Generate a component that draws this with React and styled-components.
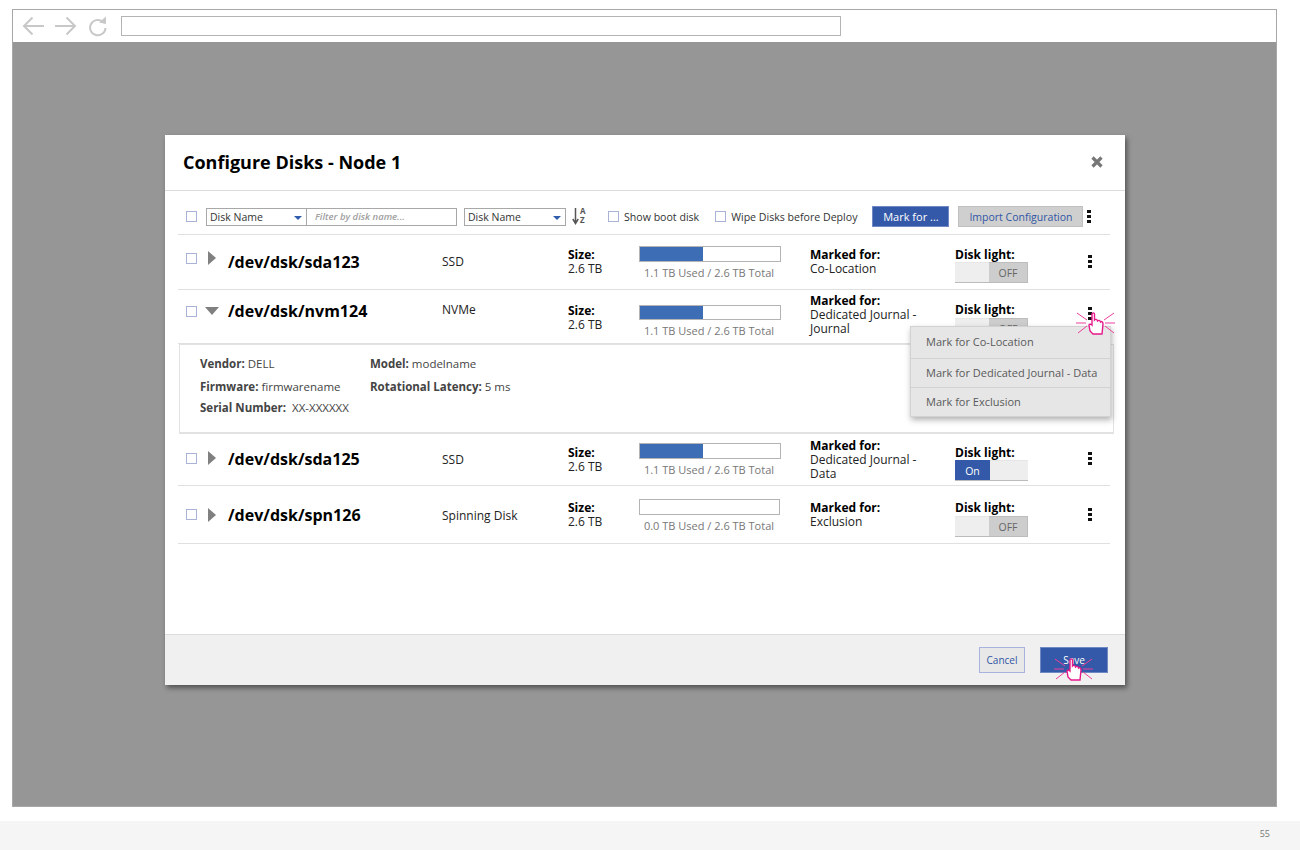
import React from "react";
import styled, { createGlobalStyle } from "styled-components";

const Global = createGlobalStyle`
  html, body { margin: 0; padding: 0; background: #fff; }
  body { font-family: "Open Sans", "Noto Sans", sans-serif; width: 1300px; height: 850px; overflow: hidden; }
  * { box-sizing: border-box; }
`;

const Page = styled.div`
  width: 1300px;
  height: 850px;
  padding-top: 9px;
  display: flex;
  flex-direction: column;
`;
const Browser = styled.div`
  margin-left: 12px;
  width: 1265px;
  height: 798px;
  border: 1px solid #a8a8a8;
  display: flex;
  flex-direction: column;
`;
const BrowserBar = styled.div`
  height: 32px;
  flex: none;
  background: #fff;
  display: flex;
  align-items: center;
  padding-left: 9px;
  svg { display: block; flex: none; }
`;
const AddressBar = styled.div`
  width: 720px;
  height: 20px;
  margin-left: 13px;
  border: 1px solid #b4b4b4;
  background: #fff;
`;
const Backdrop = styled.div`
  flex: 1;
  background: #969696;
  padding: 93px 0 0 152px;
`;
const Modal = styled.div`
  position: relative;
  width: 960px;
  height: 550px;
  background: #fff;
  box-shadow: 2px 3px 5px rgba(0, 0, 0, 0.45);
  display: flex;
  flex-direction: column;
`;
const ModalHeader = styled.div`
  height: 56px;
  flex: none;
  border-bottom: 1px solid #dcdcdc;
  display: flex;
  align-items: center;
  justify-content: space-between;
  padding: 0 22px 2px 18px;
`;
const Title = styled.h1`
  margin: 0;
  font-size: 18px;
  line-height: 24px;
  font-weight: 700;
  color: #000;
`;
const Body = styled.div`
  flex: 1;
  padding: 0 15px 0 13px;
  position: relative;
`;
const Toolbar = styled.div`
  height: 44px;
  border-bottom: 1px solid #e0e0e0;
  display: flex;
  align-items: center;
  padding: 8px 0 0 8px;
  color: #333;
  font-size: 10.5px;
`;
const Check = styled.span`
  display: block;
  width: 11px;
  height: 11px;
  flex: none;
  border: 1px solid #aab2d8;
  background: #fff;
`;
const Combo = styled.div`
  display: flex;
  height: 18px;
  margin-left: ${(p) => p.$ml}px;
  width: ${(p) => p.$w}px;
  border: 1px solid #a8a8a8;
  flex: none;
`;
const Select = styled.div`
  position: relative;
  width: ${(p) => (p.$w ? p.$w + "px" : "100%")};
  height: 100%;
  padding-left: 3px;
  font-size: 10.5px;
  line-height: 16px;
  color: #333;
  flex: none;
  &::after {
    content: "";
    position: absolute;
    right: 4px;
    top: 7px;
    border-left: 4px solid transparent;
    border-right: 4px solid transparent;
    border-top: 4px solid #2f5cad;
  }
`;
const FilterInput = styled.div`
  flex: 1;
  border-left: 1px solid #a8a8a8;
  padding-left: 8px;
  font-size: 9.5px;
  line-height: 16px;
  font-style: italic;
  font-weight: 600;
  color: #a0a0a0;
`;
const SortIcon = styled.svg`
  margin-left: 6px;
  flex: none;
`;
const CheckLabel = styled.label`
  display: flex;
  align-items: center;
  flex: none;
  gap: 5px;
  margin-left: ${(p) => p.$ml}px;
  font-size: 10.6px;
  color: #333;
  white-space: nowrap;
`;
const Button = styled.div`
  height: ${(p) => p.$h || 21}px;
  width: ${(p) => p.$w}px;
  margin-left: ${(p) => p.$ml || 0}px;
  flex: none;
  display: flex;
  align-items: center;
  justify-content: center;
  padding-top: ${(p) => p.$pt || 0}px;
  font-size: ${(p) => p.$fs || 10.5}px;
  background: ${(p) => (p.$kind === "primary" ? "#3359a8" : p.$kind === "cancel" ? "#e8e8e8" : "#cfcfcf")};
  color: ${(p) => (p.$kind === "primary" ? "#fff" : "#2f55a4")};
  border: 1px solid ${(p) => (p.$kind === "primary" ? "#7088c4" : p.$kind === "cancel" ? "#a8b2dc" : "#c0c0c0")};
`;
const DotsWrap = styled.div`
  display: flex;
  flex-direction: column;
  gap: 2px;
  width: 4px;
  flex: none;
  margin-left: ${(p) => p.$ml || 0}px;
`;
const Dot = styled.i`
  display: block;
  width: 4px;
  height: 3px;
  background: #111;
`;
const Dots = (p) => (
  <DotsWrap {...p}>
    <Dot />
    <Dot />
    <Dot />
  </DotsWrap>
);

const Row = styled.div`
  height: ${(p) => p.$h}px;
  border-bottom: 1px solid #e0e0e0;
  display: grid;
  grid-template-columns: 21px 21px 214px 126px 71px 171px 145px 120px 1fr;
  padding-left: 8px;
  color: #222;
  font-size: 12px;
  line-height: 14px;
`;
const Cell = styled.div`
  padding-top: ${(p) => p.$t}px;
  min-width: 0;
`;
const Triangle = styled.div`
  width: 0;
  height: 0;
  ${(p) =>
    p.$open
      ? `border-left: 7px solid transparent; border-right: 7px solid transparent; border-top: 8px solid #808080; margin-left: -2px;`
      : `border-top: 7px solid transparent; border-bottom: 7px solid transparent; border-left: 8px solid #808080; margin-left: 1px;`}
`;
const DiskName = styled.div`
  font-size: 16px;
  line-height: 22px;
  font-weight: 700;
  color: #000;
`;
const Strong = styled.div`
  font-weight: 700;
  color: #000;
`;
const Bar = styled.div`
  width: ${(p) => p.$w || 142}px;
  height: ${(p) => p.$h || 16}px;
  border: 1px solid #b4b4b4;
  background: #fff;
`;
const BarFill = styled.div`
  height: 100%;
  background: #3d6db5;
`;
const BarText = styled.div`
  width: 140px;
  margin-top: 4px;
  text-align: center;
  font-size: 11px;
  line-height: 14px;
  color: #777;
`;
const Toggle = styled.div`
  display: flex;
  width: 73px;
  height: 21px;
  margin-top: ${(p) => p.$mt || 0}px;
  border-bottom: 1px solid #bbb;
  font-size: 10.5px;
`;
const ToggleSide = styled.div`
  width: ${(p) => p.$w}px;
  display: flex;
  align-items: center;
  justify-content: center;
  background: ${(p) => (p.$tone === "on" ? "#3359a8" : p.$tone === "off" ? "#cdcdcd" : "#eeeeee")};
  color: ${(p) => (p.$tone === "on" ? "#fff" : "#666")};
  border-top: 1px solid ${(p) => (p.$tone === "off" ? "#bdbdbd" : p.$tone === "on" ? "#3359a8" : "#e6e6e6")};
  border-right: ${(p) => (p.$tone === "off" ? "1px solid #bdbdbd" : "none")};
`;
const Detail = styled.div`
  height: 90px;
  margin: 0 -4px 0 1px;
  border: 1px solid #e2e2e2;
  border-bottom-width: 2px;
  padding: 10px 0 0 20px;
  display: grid;
  grid-template-columns: 170px 1fr;
  grid-template-rows: 23px 21px 21px;
  font-size: 11.5px;
  line-height: 18px;
  color: #444;
  b { font-weight: 700; color: #444; }
`;
const Menu = styled.div`
  position: absolute;
  top: 135px;
  left: 745px;
  width: 201px;
  background: #e6e6e6;
  border: 1px solid #d2d2d2;
  box-shadow: 1px 3px 6px rgba(0, 0, 0, 0.3);
  z-index: 3;
`;
const MenuItem = styled.div`
  height: ${(p) => p.$h}px;
  padding: 0 0 2px 15px;
  display: flex;
  align-items: center;
  font-size: 11px;
  color: #5a5a5a;
  border-bottom: ${(p) => (p.$last ? "none" : "1px solid #d2d2d2")};
`;
const Footer = styled.div`
  height: 51px;
  flex: none;
  background: #f0f0f0;
  border-top: 1px solid #dcdcdc;
  display: flex;
  align-items: center;
  justify-content: flex-end;
  padding: 0 17px 1px 0;
`;
const Cursor = styled.svg`
  position: absolute;
  left: ${(p) => p.$x}px;
  top: ${(p) => p.$y}px;
  z-index: 5;
  pointer-events: none;
`;
const PageFooter = styled.div`
  margin-top: 14px;
  height: 29px;
  background: #f5f5f5;
  display: flex;
  justify-content: flex-end;
  align-items: center;
  padding: 0 30px 5px 0;
  font-size: 9px;
  color: #777;
`;

const ClickHand = ({ x, y }) => (
  <Cursor $x={x} $y={y} width="40" height="32" viewBox="0 0 40 32">
    <path
      d="M1 4 L11 11 M0 14 L10 14 M2 24 L11 17 M38 4 L28 11 M39 14 L29 14 M38 24 L29 17"
      stroke="#ee3f9c"
      strokeWidth="1"
      fill="none"
    />
    <path
      d="M14 22 L13 16 C13 15 15 15 16 16 L16 5 C16 3.5 18.5 3.5 18.5 5 L18.5 11 C19.5 10 21 10 21.5 12 C22.5 11 24 11 24.5 13 C25.5 12 27 13 27 15 L26 25 L17 25 Z"
      fill="#fff"
      stroke="#e6188a"
      strokeWidth="1.4"
    />
  </Cursor>
);

const rows = [
  { name: "/dev/dsk/sda123", type: "SSD", h: 55, t: { c: 18, a: 16, n: 16, ty: 20, s: 13, b: 11, m: 13, l: 13, d: 20 }, mark: ["Co-Location"], used: 45, usedText: "1.1 TB Used / 2.6 TB Total", on: false, mt: 0 },
  { name: "/dev/dsk/nvm124", type: "NVMe", h: 54, open: true, barH: 15, t: { c: 16, a: 17, n: 10, ty: 13, s: 14, b: 15, m: 4, l: 13, d: 17 }, mark: ["Dedicated Journal -", "Journal"], used: 45, usedText: "1.1 TB Used / 2.6 TB Total", on: false, mt: 1 },
  { name: "/dev/dsk/sda125", type: "SSD", h: 52, t: { c: 19, a: 17, n: 14, ty: 19, s: 12, b: 9, m: 5, l: 12, d: 18 }, mark: ["Dedicated Journal -", "Data"], used: 45, usedText: "1.1 TB Used / 2.6 TB Total", on: true, mt: 0 },
  { name: "/dev/dsk/spn126", type: "Spinning Disk", h: 58, t: { c: 23, a: 22, n: 18, ty: 23, s: 15, b: 13, m: 15, l: 15, d: 22 }, mark: ["Exclusion"], used: 0, barW: 141, usedText: "0.0 TB Used / 2.6 TB Total", on: false, mt: 1 },
];

const DiskRow = ({ r }) => (
  <Row $h={r.h}>
    <Cell $t={r.t.c}><Check /></Cell>
    <Cell $t={r.t.a}><Triangle $open={r.open} /></Cell>
    <Cell $t={r.t.n}><DiskName>{r.name}</DiskName></Cell>
    <Cell $t={r.t.ty}>{r.type}</Cell>
    <Cell $t={r.t.s}>
      <Strong>Size:</Strong>
      <div>2.6 TB</div>
    </Cell>
    <Cell $t={r.t.b}>
      <Bar $w={r.barW} $h={r.barH}>
        <BarFill style={{ width: `${r.used}%` }} />
      </Bar>
      <BarText>{r.usedText}</BarText>
    </Cell>
    <Cell $t={r.t.m}>
      <Strong>Marked for:</Strong>
      {r.mark.map((m) => (
        <div key={m}>{m}</div>
      ))}
    </Cell>
    <Cell $t={r.t.l}>
      <Strong>Disk light:</Strong>
      <Toggle $mt={r.mt}>
        {r.on ? (
          <>
            <ToggleSide $w={35} $tone="on">On</ToggleSide>
            <ToggleSide $w={38} $tone="idle" />
          </>
        ) : (
          <>
            <ToggleSide $w={34} $tone="idle" />
            <ToggleSide $w={39} $tone="off">OFF</ToggleSide>
          </>
        )}
      </Toggle>
    </Cell>
    <Cell $t={r.t.d}><Dots $ml={13} /></Cell>
  </Row>
);

export default function App() {
  return (
    <Page>
      <Global />
      <Browser>
        <BrowserBar>
          <svg width="22" height="20" viewBox="0 0 22 20" fill="none" stroke="#c8c8c8" strokeWidth="2">
            <path d="M22 10 H2 M10.5 1.5 L2 10 L10.5 18.5" />
          </svg>
          <svg style={{ marginLeft: 11 }} width="22" height="20" viewBox="0 0 22 20" fill="none" stroke="#c8c8c8" strokeWidth="2">
            <path d="M0 10 H20 M11.5 1.5 L20 10 L11.5 18.5" />
          </svg>
          <svg style={{ marginLeft: 11 }} width="20" height="21" viewBox="0 0 20 21">
            <path d="M14.5 5.5 A7.7 7.7 0 1 0 17.5 12" fill="none" stroke="#c8c8c8" strokeWidth="2" />
            <path d="M11 6.5 L18 0.5 L18 8 Z" fill="#c8c8c8" />
          </svg>
          <AddressBar />
        </BrowserBar>
        <Backdrop>
          <Modal>
            <ModalHeader>
              <Title>Configure Disks - Node 1</Title>
              <svg width="12" height="12" viewBox="0 0 12 12" fill="none" stroke="#777" strokeWidth="3.2">
                <path d="M1.5 1.5 L10.5 10.5 M10.5 1.5 L1.5 10.5" />
              </svg>
            </ModalHeader>
            <Body>
              <Toolbar>
                <Check />
                <Combo $ml={9} $w={251}>
                  <Select $w={99}>Disk Name</Select>
                  <FilterInput>Filter by disk name...</FilterInput>
                </Combo>
                <Combo $ml={7} $w={102}>
                  <Select>Disk Name</Select>
                </Combo>
                <SortIcon width="16" height="19" viewBox="0 0 16 19">
                  <path d="M3.5 1 V15 M0.8 12 L3.5 16.5 L6.2 12" fill="none" stroke="#555" strokeWidth="1.5" />
                  <text x="8" y="7" fontSize="8" fontWeight="700" fontFamily="Open Sans" fill="#555">A</text>
                  <text x="8" y="16" fontSize="8" fontWeight="700" fontFamily="Open Sans" fill="#555">Z</text>
                </SortIcon>
                <CheckLabel $ml={20}><Check />Show boot disk</CheckLabel>
                <CheckLabel $ml={16}><Check />Wipe Disks before Deploy</CheckLabel>
                <Button $ml={15} $w={77} $fs={11} $kind="primary">Mark for ...</Button>
                <Button $ml={9} $w={125}>Import Configuration</Button>
                <Dots $ml={4} />
              </Toolbar>
              <DiskRow r={rows[0]} />
              <DiskRow r={rows[1]} />
              <Detail>
                <div><b>Vendor:</b> DELL</div>
                <div><b>Model:</b> modelname</div>
                <div><b>Firmware:</b> firmwarename</div>
                <div><b>Rotational Latency:</b> 5 ms</div>
                <div><b>Serial Number:</b>&nbsp; XX-XXXXXX</div>
              </Detail>
              <DiskRow r={rows[2]} />
              <DiskRow r={rows[3]} />
              <Menu>
                <MenuItem $h={32}>Mark for Co-Location</MenuItem>
                <MenuItem $h={29}>Mark for Dedicated Journal - Data</MenuItem>
                <MenuItem $h={28} $last>Mark for Exclusion</MenuItem>
              </Menu>
            </Body>
            <Footer>
              <Button $w={46} $h={26} $fs={10} $pt={1} $kind="cancel">Cancel</Button>
              <Button $ml={15} $w={68} $h={26} $fs={10} $pt={1} $kind="primary">Save</Button>
            </Footer>
            <ClickHand x={911} y={174} />
            <ClickHand x={889} y={520} />
          </Modal>
        </Backdrop>
      </Browser>
      <PageFooter>55</PageFooter>
    </Page>
  );
}
